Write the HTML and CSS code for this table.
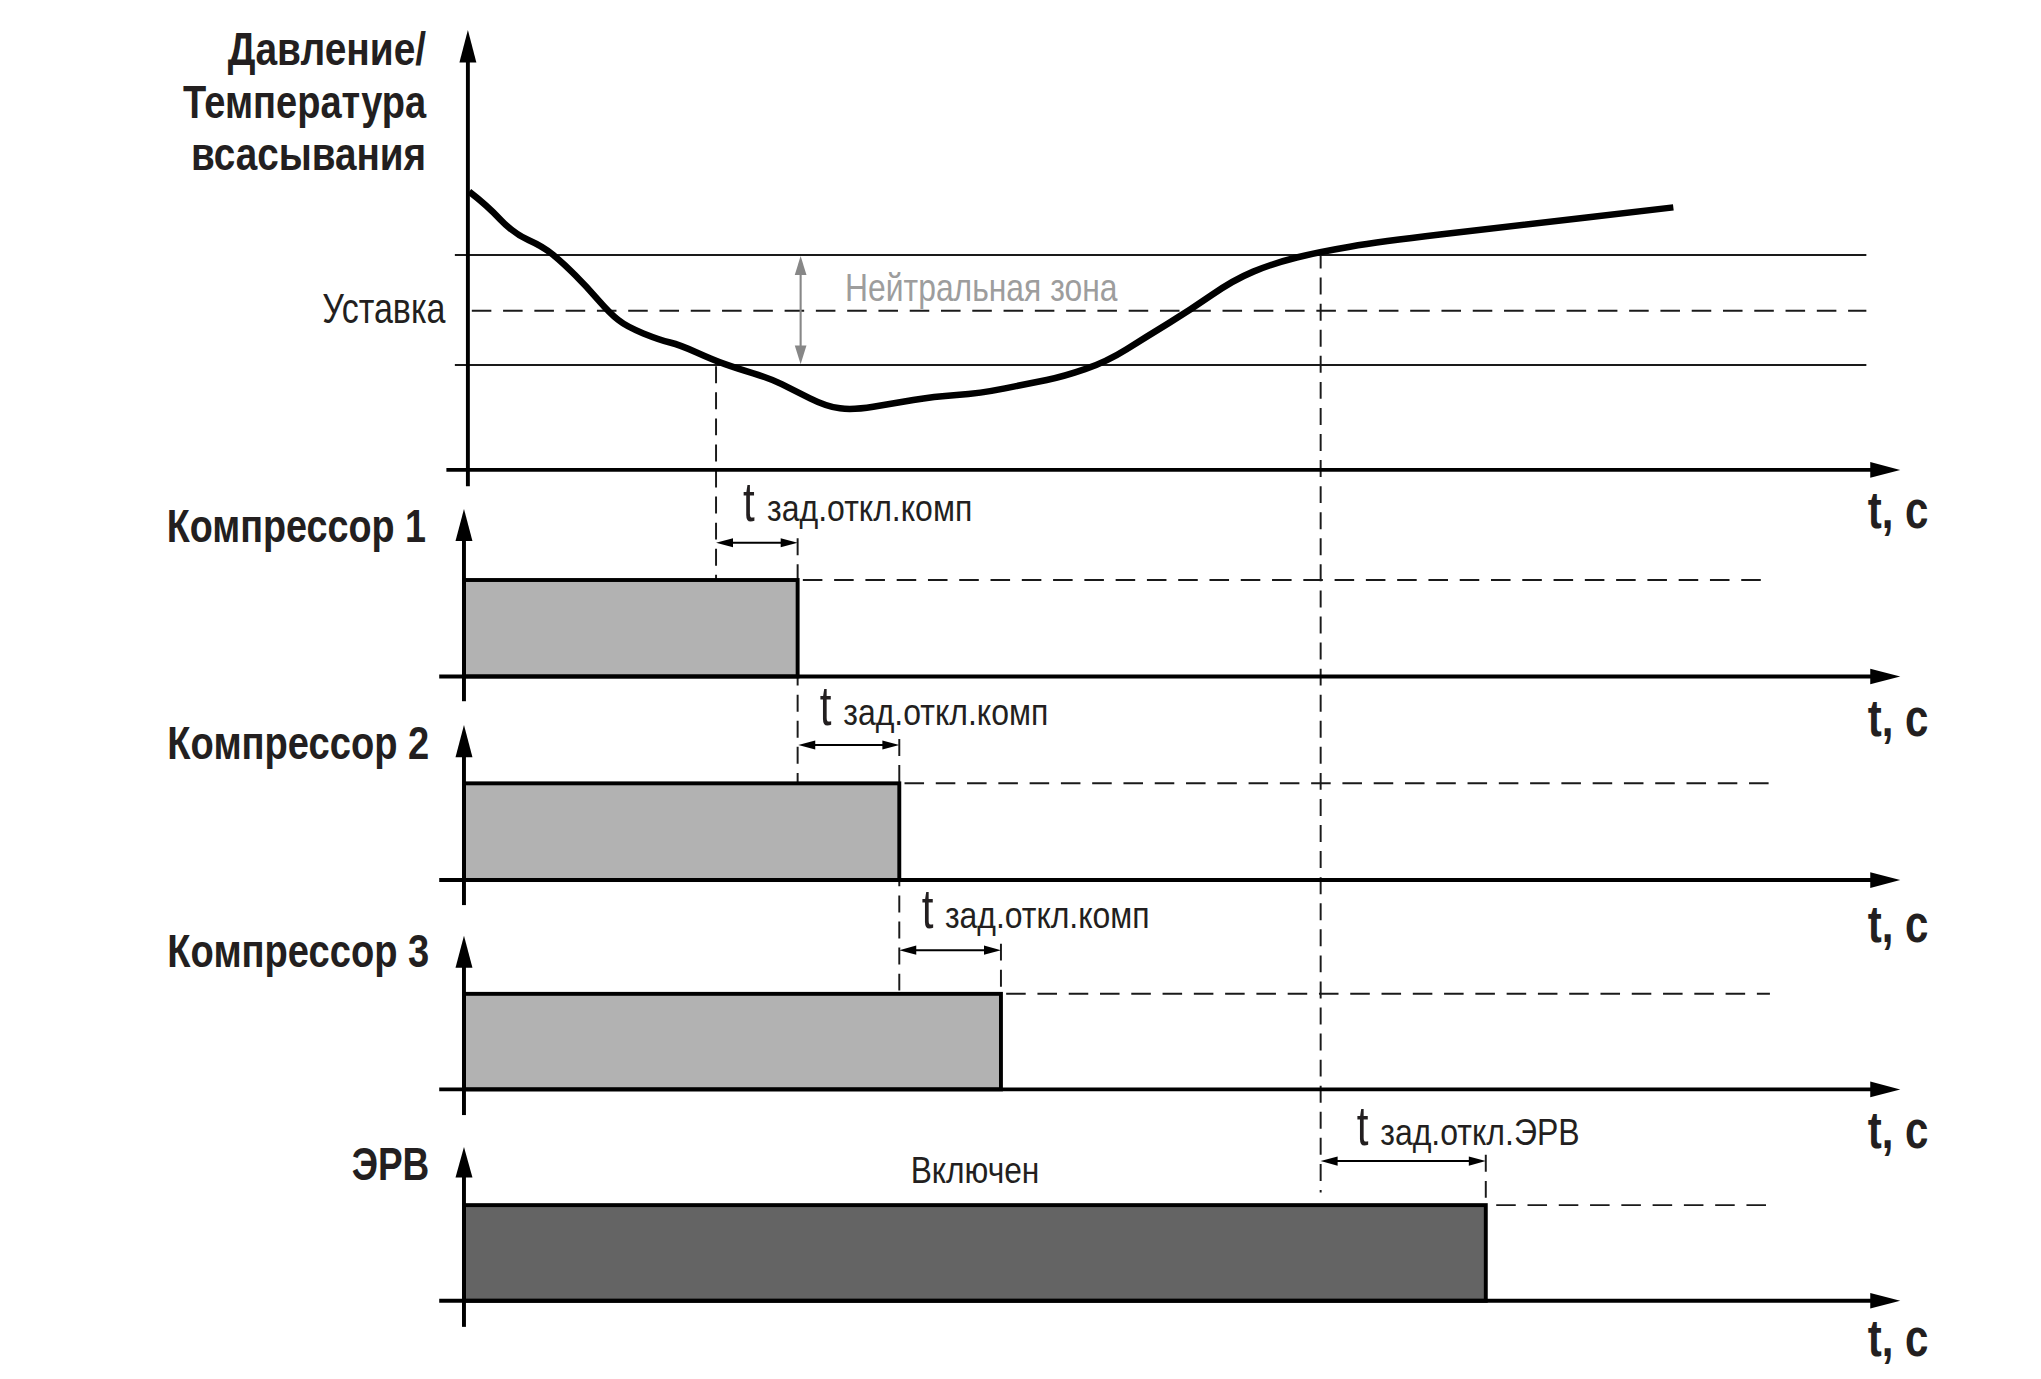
FILE: index.html
```html
<!DOCTYPE html>
<html lang="ru">
<head>
<meta charset="utf-8">
<title>Диаграмма работы компрессоров</title>
<link rel="stylesheet" href="styles.css">
</head>
<body>
<main class="figure">
<svg class="chart" viewBox="0 0 1566 1058" preserveAspectRatio="none" xmlns="http://www.w3.org/2000/svg">
  <!-- Main chart: pressure / temperature -->
  <g class="main-chart">
    <line class="thin" x1="349" y1="195.7" x2="1432" y2="195.7"/>
    <line class="dash-h" x1="362" y1="238.4" x2="1432" y2="238.4"/>
    <line class="thin" x1="349" y1="280" x2="1432" y2="280"/>

    <line class="zone" x1="614.3" y1="205" x2="614.3" y2="271"/>
    <polygon class="zone-head" points="614.3,196.5 609.8,211 618.8,211"/>
    <polygon class="zone-head" points="614.3,279.5 609.8,265 618.8,265"/>

    <line class="dash-v" x1="549.4" y1="281" x2="549.4" y2="445"/>
    <line class="dash-v" x1="1013.3" y1="193" x2="1013.3" y2="915"/>
    <line class="dash-v" x1="612" y1="413" x2="612" y2="601"/>
    <line class="dash-v" x1="690" y1="567" x2="690" y2="762.5"/>
    <line class="dash-v" x1="768" y1="724" x2="768" y2="762.5"/>
    <line class="dash-v" x1="1140" y1="886" x2="1140" y2="924.6"/>

    <path class="curve" d="M360,147 Q373.4,157.3 383.65,168.15 Q393.9,179 405.4,184.15 Q416.9,189.3 424.55,195.65 Q432.2,202 441.2,211 Q450.2,220 459.1,230.2 Q468,240.4 474.45,245.55 Q480.9,250.7 493.65,255.8 Q506.4,260.9 514.1,262.8 Q521.8,264.7 534.55,270.45 Q547.3,276.2 556.25,279.4 Q565.2,282.6 578,286.45 Q590.8,290.3 599.75,294.75 Q608.7,299.2 621.5,305.6 Q634.3,312 644.5,313.3 Q654.7,314.6 670.05,312.05 Q685.4,309.5 700.75,306.95 Q716.1,304.4 734,303.1 Q751.9,301.8 771.1,297.95 Q790.3,294.1 803.1,291.55 Q815.9,289 832.5,283.25 Q849.1,277.5 864.45,267.9 Q879.8,258.3 896.45,248.1 Q913.1,237.9 929.7,226.35 Q946.3,214.8 961.65,208.4 Q977,202 994.9,197.55 Q1012.8,193.1 1035.8,189.25 Q1058.8,185.4 1104.85,179.95 Q1150.9,174.5 1217.4,166.8 L1283.9,159.1"/>

    <line class="axis" x1="359" y1="46" x2="359" y2="373"/>
    <polygon class="head" points="359,23 352.5,48 365.5,48"/>
    <line class="axis" x1="342.5" y1="360.5" x2="1437" y2="360.5"/>
    <polygon class="head" points="1458,360.5 1435,354.5 1435,366.5"/>

    <text class="label-bold" x="174.7" y="49.9" textLength="152.3" lengthAdjust="spacingAndGlyphs">Давление/</text>
    <text class="label-bold" x="140.4" y="90.8" textLength="186.6" lengthAdjust="spacingAndGlyphs">Температура</text>
    <text class="label-bold" x="146.6" y="130.4" textLength="180.4" lengthAdjust="spacingAndGlyphs">всасывания</text>
    <text class="label-reg" x="247.3" y="248" textLength="94.5" lengthAdjust="spacingAndGlyphs">Уставка</text>
    <text class="label-zone" x="648.4" y="231" textLength="209" lengthAdjust="spacingAndGlyphs">Нейтральная зона</text>
    <text class="unit" x="1433" y="405.4" textLength="46.6" lengthAdjust="spacingAndGlyphs">t, c</text>
  </g>

  <!-- Compressor 1 -->
  <g class="row">
    <line class="dash-h" x1="616" y1="445" x2="1358" y2="445"/>
    <rect class="box-light" x="356" y="445" width="256" height="74"/>
    <line class="axis" x1="356" y1="412" x2="356" y2="538"/>
    <polygon class="head" points="356,390.6 349.5,415 362.5,415"/>
    <line class="axis" x1="337" y1="519" x2="1437" y2="519"/>
    <polygon class="head" points="1458,519 1435,513 1435,525"/>
    <line class="dim" x1="556" y1="416.4" x2="605" y2="416.4"/>
    <polygon class="head" points="549.4,416.4 562.4,412.9 562.4,419.9"/>
    <polygon class="head" points="612,416.4 599,412.9 599,419.9"/>
    <text class="t-big" x="570" y="399.5" textLength="9" lengthAdjust="spacingAndGlyphs">t</text>
    <text class="t-sub" x="588.5" y="399.5" textLength="157.5" lengthAdjust="spacingAndGlyphs">зад.откл.комп</text>
    <text class="label-bold" x="127.9" y="415.6" textLength="199" lengthAdjust="spacingAndGlyphs">Компрессор 1</text>
    <text class="unit" x="1433" y="565" textLength="46.6" lengthAdjust="spacingAndGlyphs">t, c</text>
  </g>

  <!-- Compressor 2 -->
  <g class="row">
    <line class="dash-h" x1="694" y1="601" x2="1358" y2="601"/>
    <rect class="box-light" x="356" y="601" width="334" height="74.2"/>
    <line class="axis" x1="356" y1="578" x2="356" y2="694.4"/>
    <polygon class="head" points="356,556.3 349.5,581 362.5,581"/>
    <line class="axis" x1="337" y1="675.2" x2="1437" y2="675.2"/>
    <polygon class="head" points="1458,675.2 1435,669.2 1435,681.2"/>
    <line class="dim" x1="619" y1="571.6" x2="683" y2="571.6"/>
    <polygon class="head" points="612.5,571.6 625.5,568.1 625.5,575.1"/>
    <polygon class="head" points="690,571.6 677,568.1 677,575.1"/>
    <text class="t-big" x="629" y="556.3" textLength="9" lengthAdjust="spacingAndGlyphs">t</text>
    <text class="t-sub" x="647" y="556.3" textLength="157.3" lengthAdjust="spacingAndGlyphs">зад.откл.комп</text>
    <text class="label-bold" x="128.4" y="582" textLength="201" lengthAdjust="spacingAndGlyphs">Компрессор 2</text>
    <text class="unit" x="1433" y="723" textLength="46.6" lengthAdjust="spacingAndGlyphs">t, c</text>
  </g>

  <!-- Compressor 3 -->
  <g class="row">
    <line class="dash-h" x1="772" y1="762.5" x2="1358" y2="762.5"/>
    <rect class="box-light" x="356" y="762.5" width="412" height="73.3"/>
    <line class="axis" x1="356" y1="740" x2="356" y2="855.5"/>
    <polygon class="head" points="356,718 349.5,742.5 362.5,742.5"/>
    <line class="axis" x1="337" y1="835.8" x2="1437" y2="835.8"/>
    <polygon class="head" points="1458,835.8 1435,829.8 1435,841.8"/>
    <line class="dim" x1="697" y1="729" x2="761" y2="729"/>
    <polygon class="head" points="690,729 703,725.5 703,732.5"/>
    <polygon class="head" points="768,729 755,725.5 755,732.5"/>
    <text class="t-big" x="707.2" y="712.3" textLength="9" lengthAdjust="spacingAndGlyphs">t</text>
    <text class="t-sub" x="725" y="712.3" textLength="157" lengthAdjust="spacingAndGlyphs">зад.откл.комп</text>
    <text class="label-bold" x="128.4" y="742" textLength="201" lengthAdjust="spacingAndGlyphs">Компрессор 3</text>
    <text class="unit" x="1433" y="881" textLength="46.6" lengthAdjust="spacingAndGlyphs">t, c</text>
  </g>

  <!-- ЭРВ -->
  <g class="row">
    <line class="dash-h" x1="1148" y1="924.6" x2="1358" y2="924.6"/>
    <rect class="box-dark" x="356" y="924.6" width="784" height="73.4"/>
    <line class="axis" x1="356" y1="901" x2="356" y2="1018"/>
    <polygon class="head" points="356,880 349.5,903.5 362.5,903.5"/>
    <line class="axis" x1="337" y1="998" x2="1437" y2="998"/>
    <polygon class="head" points="1458,998 1435,992 1435,1004"/>
    <line class="dim" x1="1020" y1="890.8" x2="1133" y2="890.8"/>
    <polygon class="head" points="1013.3,890.8 1026.3,887.3 1026.3,894.3"/>
    <polygon class="head" points="1140,890.8 1127,887.3 1127,894.3"/>
    <text class="t-big" x="1041" y="878.5" textLength="9" lengthAdjust="spacingAndGlyphs">t</text>
    <text class="t-sub" x="1059" y="878.5" textLength="153" lengthAdjust="spacingAndGlyphs">зад.откл.ЭРВ</text>
    <text class="label-reg-sm" x="698.7" y="907.4" textLength="98.8" lengthAdjust="spacingAndGlyphs">Включен</text>
    <text class="label-bold" x="269.8" y="905.4" textLength="59.6" lengthAdjust="spacingAndGlyphs">ЭРВ</text>
    <text class="unit" x="1433" y="1040" textLength="46.6" lengthAdjust="spacingAndGlyphs">t, c</text>
  </g>
</svg>
</main>
</body>
</html>
```

FILE: styles.css
```css
html, body {
  margin: 0;
  padding: 0;
  background: #ffffff;
}

.figure {
  display: block;
  width: 2041px;
  height: 1379px;
  overflow: hidden;
}

.chart {
  display: block;
  width: 2041px;
  height: 1379px;
}

.axis {
  stroke: #000000;
  stroke-width: 3;
}

.head {
  fill: #000000;
}

.thin {
  stroke: #1a1a1a;
  stroke-width: 1.5;
}

.dash-h {
  stroke: #1a1a1a;
  stroke-width: 1.5;
  stroke-dasharray: 15 9;
}

.dash-v {
  stroke: #1a1a1a;
  stroke-width: 1.5;
  stroke-dasharray: 13 7;
}

.dim {
  stroke: #000000;
  stroke-width: 1.6;
}

.zone {
  stroke: #878787;
  stroke-width: 1.6;
}

.zone-head {
  fill: #878787;
}

.curve {
  fill: none;
  stroke: #000000;
  stroke-width: 5;
  stroke-linejoin: round;
}

.box-light {
  fill: #b2b2b2;
  stroke: #000000;
  stroke-width: 3;
}

.box-dark {
  fill: #646464;
  stroke: #000000;
  stroke-width: 3;
}

.label-bold {
  font-family: "Liberation Sans Narrow", "Liberation Sans", Arial, sans-serif;
  font-weight: 700;
  font-size: 36px;
  fill: #231f20;
}

.unit {
  font-family: "Liberation Sans Narrow", "Liberation Sans", Arial, sans-serif;
  font-weight: 700;
  font-size: 40px;
  fill: #231f20;
}

.label-reg {
  font-family: "Liberation Sans Narrow", "Liberation Sans", Arial, sans-serif;
  font-weight: 400;
  font-size: 32px;
  fill: #231f20;
}

.label-reg-sm {
  font-family: "Liberation Sans Narrow", "Liberation Sans", Arial, sans-serif;
  font-weight: 400;
  font-size: 28px;
  fill: #231f20;
}

.label-zone {
  font-family: "Liberation Sans Narrow", "Liberation Sans", Arial, sans-serif;
  font-weight: 400;
  font-size: 30px;
  fill: #9d9d9d;
}

.t-big {
  font-family: "Liberation Sans Narrow", "Liberation Sans", Arial, sans-serif;
  font-weight: 400;
  font-size: 42px;
  fill: #231f20;
}

.t-sub {
  font-family: "Liberation Sans Narrow", "Liberation Sans", Arial, sans-serif;
  font-weight: 400;
  font-size: 28px;
  fill: #231f20;
}
```
